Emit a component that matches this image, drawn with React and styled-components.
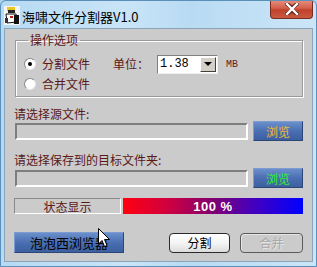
import React from 'react';
import styled, { createGlobalStyle } from 'styled-components';

const GlobalStyle = createGlobalStyle`
  html, body {
    margin: 0;
    padding: 0;
    background: #a8d2ee;
  }
  * {
    box-sizing: border-box;
  }
`;

const cjk = `"Noto Sans CJK SC", "Noto Sans", sans-serif`;

const Frame = styled.div`
  position: relative;
  width: 317px;
  height: 267px;
  display: flex;
  flex-direction: column;
  background: linear-gradient(90deg, #b6daf3 0%, #c9e4f7 40%, #b8dbf3 60%, #cbe5f7 100%);
  border: 1px solid #5a8fba;
  border-radius: 6px 6px 0 0;
  padding: 0 3px 4px 3px;
  font-family: ${cjk};
  overflow: hidden;
`;

const TitleBar = styled.div`
  height: 27px;
  display: flex;
  align-items: flex-start;
  justify-content: space-between;
  flex-shrink: 0;
`;

const TitleLeft = styled.div`
  display: flex;
  align-items: center;
  gap: 2px;
  padding-top: 5px;
`;

const TitleText = styled.span`
  font-size: 13px;
  line-height: 16px;
  color: #000;
  padding-top: 2px;
`;

const CloseButton = styled.div`
  width: 43px;
  height: 19px;
  margin-top: -1px;
  border: 1px solid #7a2a20;
  border-top: none;
  border-radius: 0 0 4px 4px;
  background: linear-gradient(180deg, #e8907f 0%, #d2604c 45%, #c0412c 55%, #c95a40 100%);
  display: flex;
  align-items: center;
  justify-content: center;
`;

const Client = styled.div`
  flex: 1;
  background: #cbcbcb;
  border: 1px solid #8aa4bc;
  padding: 3px 9px 0 9px;
  display: flex;
  flex-direction: column;
`;

const Group = styled.fieldset`
  margin: 0 0 0 1px;
  padding: 6px 8px 2px 8px;
  border: 1px solid #9a9a9a;
  box-shadow: 1px 1px 0 #fff, inset 1px 1px 0 #fff;
  min-width: 0;
`;

const Legend = styled.legend`
  padding: 0 2px;
  margin-left: 4px;
  font-size: 12px;
  line-height: 16px;
  color: #5a1818;
`;

const OptionRow = styled.div`
  height: 20px;
  display: flex;
  align-items: center;
`;

const Radio = styled.span`
  width: 12px;
  height: 12px;
  border-radius: 50%;
  background: #fff;
  border: 1px solid #8a8a8a;
  border-bottom-color: #e8e8e8;
  border-right-color: #e8e8e8;
  display: flex;
  align-items: center;
  justify-content: center;
  margin-right: 6px;
  &::after {
    content: '';
    width: 4px;
    height: 4px;
    border-radius: 50%;
    background: ${(p) => (p.checked ? '#000' : 'transparent')};
  }
`;

const Text = styled.span`
  font-size: 12px;
  line-height: 14px;
  color: #5a1818;
  width: ${(p) => p.width || 'auto'};
`;

const Select = styled.div`
  width: 61px;
  height: 19px;
  background: #fff;
  border: 1px solid #808080;
  border-right-color: #f0f0f0;
  border-bottom-color: #f0f0f0;
  display: flex;
  align-items: center;
  justify-content: space-between;
  padding-left: 2px;
  font-family: "Liberation Mono", monospace;
  font-size: 12px;
  color: #000;
`;

const DropButton = styled.span`
  width: 16px;
  height: 15px;
  margin-right: 1px;
  background: #d4d0c8;
  border: 1px solid #fff;
  border-right-color: #404040;
  border-bottom-color: #404040;
  display: flex;
  align-items: center;
  justify-content: center;
  &::after {
    content: '';
    border-left: 4px solid transparent;
    border-right: 4px solid transparent;
    border-top: 4px solid #000;
  }
`;

const Unit = styled.span`
  margin-left: 8px;
  font-family: "Liberation Mono", monospace;
  font-size: 10px;
  color: #6a1a1a;
`;

const FieldLabel = styled.div`
  font-size: 12px;
  line-height: 14px;
  color: #5a1818;
  margin-top: ${(p) => p.top}px;
`;

const FieldRow = styled.div`
  height: 20px;
  margin-top: ${(p) => p.top}px;
  display: flex;
  align-items: center;
  gap: 5px;
  padding-left: 1px;
`;

const PathInput = styled.div`
  width: 233px;
  height: 17px;
  border-top: 2px solid #7e7e7e;
  border-left: 2px solid #7e7e7e;
  border-right: 2px solid #fff;
  border-bottom: 2px solid #fff;
  background: #cbcbcb;
`;

const BlueButton = styled.div`
  width: ${(p) => p.width}px;
  height: ${(p) => p.height || 20}px;
  background: linear-gradient(180deg, #6b8fcc 0%, #4a6fb2 50%, #3b5f9f 100%);
  border: 1px solid #2c4677;
  border-top-color: #7d9bd0;
  border-left-color: #7d9bd0;
  display: flex;
  align-items: center;
  justify-content: center;
  font-size: ${(p) => p.size || 12}px;
  color: ${(p) => p.color};
`;

const StatusRow = styled.div`
  height: 16px;
  margin-top: 10px;
  display: flex;
  gap: 2px;
`;

const StatusBox = styled.div`
  width: 107px;
  border-top: 1px solid #8a8a8a;
  border-left: 1px solid #8a8a8a;
  border-right: 1px solid #fff;
  border-bottom: 1px solid #fff;
  display: flex;
  align-items: center;
  justify-content: center;
  font-size: 12px;
  color: #5a1818;
`;

const Progress = styled.div`
  width: 180px;
  background: linear-gradient(90deg, #ff0010 0%, #d00040 25%, #800070 50%, #4a00b8 70%, #0000ff 100%);
  display: flex;
  align-items: center;
  justify-content: center;
  font-family: "Liberation Sans", Arial, sans-serif;
  font-weight: bold;
  font-size: 13px;
  color: #fff;
  letter-spacing: 0.5px;
`;

const ButtonRow = styled.div`
  margin-top: 18px;
  height: 21px;
  display: flex;
  justify-content: space-between;
  align-items: center;
`;

const RightButtons = styled.div`
  display: flex;
  gap: 10px;
`;

const RoundButton = styled.div`
  width: ${(p) => p.width}px;
  height: 20px;
  border: 1px solid ${(p) => (p.disabled ? '#5a5a5a' : '#2a2a2a')};
  border-radius: 4px;
  background: ${(p) =>
    p.disabled ? '#cbcbcb' : 'linear-gradient(180deg, #ffffff 0%, #f4f4f4 50%, #dcdcdc 100%)'};
  box-shadow: ${(p) => (p.disabled ? 'inset 1px 1px 0 #e6e6e6' : 'none')};
  display: flex;
  align-items: center;
  justify-content: center;
  font-size: 12px;
  color: ${(p) => (p.disabled ? '#a8a8a8' : '#000')};
  text-shadow: ${(p) => (p.disabled ? '1px 1px 0 #e8e8e8' : 'none')};
`;

const Cursor = styled.svg`
  position: absolute;
  left: 97px;
  top: 227px;
`;

const AppIcon = () => (
  <svg width="16" height="19" viewBox="0 0 16 19">
    <rect x="0" y="0" width="16" height="19" fill="#f4f4f4" />
    <rect x="3" y="1" width="8" height="4" fill="#e8c820" />
    <rect x="4" y="4" width="7" height="3" fill="#222" />
    <path d="M2 8 L12 8 L13 16 L3 17 Z" fill="#fff" stroke="#111" strokeWidth="1" />
    <rect x="10" y="9" width="5" height="9" fill="#111" />
    <rect x="1" y="12" width="3" height="5" fill="#333" />
    <rect x="6" y="10" width="3" height="2" fill="#c02020" />
  </svg>
);

const CloseIcon = () => (
  <svg width="14" height="12" viewBox="0 0 14 12">
    <path
      d="M2 1 L7 5 L12 1 M2 11 L7 7 L12 11 M7 5 L7 7"
      stroke="#5a2018"
      strokeWidth="4"
      strokeLinecap="square"
      fill="none"
    />
    <path
      d="M2 1 L12 11 M12 1 L2 11"
      stroke="#fff"
      strokeWidth="2.4"
      strokeLinecap="square"
      fill="none"
    />
  </svg>
);

export default function App() {
  return (
    <>
      <GlobalStyle />
      <Frame>
        <TitleBar>
          <TitleLeft>
            <AppIcon />
            <TitleText>海啸文件分割器V1.0</TitleText>
          </TitleLeft>
          <CloseButton>
            <CloseIcon />
          </CloseButton>
        </TitleBar>
        <Client>
          <Group>
            <Legend>操作选项</Legend>
            <OptionRow>
              <Radio checked />
              <Text width="71px">分割文件</Text>
              <Text width="44px">单位：</Text>
              <Select>
                1.38
                <DropButton />
              </Select>
              <Unit>MB</Unit>
            </OptionRow>
            <OptionRow>
              <Radio />
              <Text>合并文件</Text>
            </OptionRow>
          </Group>

          <FieldLabel top={10}>请选择源文件:</FieldLabel>
          <FieldRow top={0}>
            <PathInput />
            <BlueButton width={50} color="#f8b838">浏览</BlueButton>
          </FieldRow>

          <FieldLabel top={12}>请选择保存到的目标文件夹:</FieldLabel>
          <FieldRow top={1}>
            <PathInput />
            <BlueButton width={50} color="#30f030">浏览</BlueButton>
          </FieldRow>

          <StatusRow>
            <StatusBox>状态显示</StatusBox>
            <Progress>100 %</Progress>
          </StatusRow>

          <ButtonRow>
            <BlueButton width={110} height={21} size={13} color="#000">泡泡西浏览器</BlueButton>
            <RightButtons>
              <RoundButton width={61}>分割</RoundButton>
              <RoundButton width={63} disabled>合并</RoundButton>
            </RightButtons>
          </ButtonRow>
        </Client>
        <Cursor width="13" height="20" viewBox="0 0 13 20">
          <path
            d="M0.5 0.5 L0.5 16 L4 12.5 L6.5 18.5 L9 17.5 L6.5 11.5 L11.5 11.5 Z"
            fill="#fff"
            stroke="#000"
            strokeWidth="1"
          />
        </Cursor>
      </Frame>
    </>
  );
}
